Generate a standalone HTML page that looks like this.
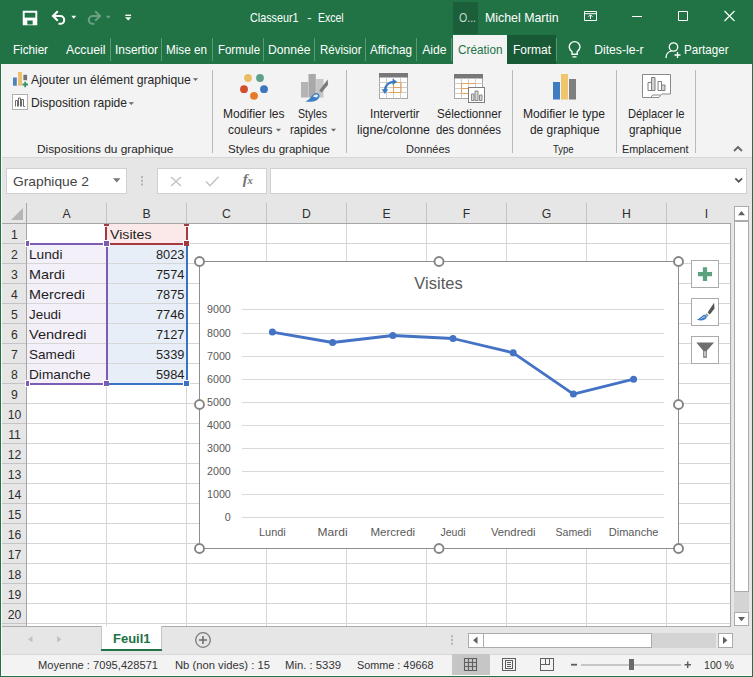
<!DOCTYPE html>
<html lang="fr"><head>
<meta charset="utf-8">
<title>Classeur1 - Excel</title>
<style>
html,body{margin:0;padding:0;}
body{width:753px;height:677px;overflow:hidden;position:relative;background:#fff;font-family:"Liberation Sans",sans-serif;font-size:12.200px;color:#262626;}
.a{position:absolute;}
svg{position:absolute;overflow:visible;}
.t{position:absolute;white-space:nowrap;line-height:16px;transform-origin:0 0;}
#titlebar{left:0;top:0;width:753px;height:64px;background:#217346;}
#titlebar .t{color:#fff;}
.sep{position:absolute;width:1px;top:38px;height:23px;background:#5b9877;}
#ribbon{left:1px;top:64px;width:751px;height:93px;background:#f3f3f3;}
.gsep{position:absolute;width:1px;top:6px;height:83px;background:#b9b9b9;}
#fbar{left:1px;top:157px;width:751px;height:46px;background:#e6e6e6;}
.box{position:absolute;background:#fff;border:1px solid #d0d0d0;box-sizing:border-box;}
#grid{left:1px;top:203px;width:751px;height:423px;background:#e6e6e6;overflow:hidden;}
.ch{position:absolute;top:1px;height:20px;line-height:20px;text-align:center;color:#2e2e2e;font-size:12.200px;width:80px;}
.rh{position:absolute;left:1px;width:25px;height:20px;line-height:22.400px;text-align:center;color:#2e2e2e;font-size:12.200px;}
.cell{font-size:13px;color:#1e1e1e;line-height:22px;}
#tabs{left:1px;top:626px;width:751px;height:28px;background:#e6e6e6;}
#status{left:1px;top:654px;width:751px;height:22px;background:#f3f3f3;}
#status .t{color:#333;font-size:11.700px;}
.ct{fill:#595959;font-family:"Liberation Sans",sans-serif;font-size:10.7px;}
</style>
</head>
<body>
<div id="titlebar" class="a">
  <svg style="left:0;top:0" width="753" height="64" viewBox="0 0 753 64" fill="none" stroke="#fff" stroke-width="1.2">
    <!-- save -->
    <path d="M23.700 11.700h12.600v12.600h-12.600z" stroke-width="1.900"></path>
    <path d="M24 17.600h12v6.400h-12z" fill="#fff" stroke="none"></path>
    <path d="M27.300 20.600h5.400v3.800h-5.400z" fill="#217346" stroke="none"></path>
    <!-- undo -->
    <path d="M53.500 16h6.800a3.900 3.900 0 0 1 0 7.800h-1.800" stroke-width="2.100"></path>
    <path d="M57.800 11.300l-4.800 4.700 4.800 4.700" stroke-width="2.100"></path>
    <path d="M71.300 15.800h5l-2.500 3z" fill="#fff" stroke="none"></path>
    <!-- redo -->
    <g opacity="0.32">
    <path d="M99.500 16h-6.800a3.900 3.900 0 0 0 0 7.800h1.800" stroke-width="2.100"></path>
    <path d="M95.200 11.300l4.800 4.700-4.800 4.700" stroke-width="2.100"></path>
    <path d="M105.800 15.800h5l-2.500 3z" fill="#fff" stroke="none"></path>
    </g>
    <!-- qat -->
    <path d="M125.300 15.300h5.800" stroke-width="1.400"></path>
    <path d="M125 17.300h6.400l-3.200 3.300z" fill="#fff" stroke="none"></path>
    <!-- ribbon display options -->
    <path d="M584.500 11.500h12v9h-12z M584.500 13.700h12" stroke-width="1"></path>
    <path d="M590.500 19v-4 M588.500 16.800l2-2 2 2" stroke-width="1"></path>
    <!-- min max close -->
    <path d="M632 16.500h10" stroke-width="1"></path>
    <path d="M678.500 11.500h9v9h-9z" stroke-width="1"></path>
    <path d="M724.500 11l10 10 M734.500 11l-10 10" stroke-width="1.1"></path>
    <!-- bulb -->
    <path d="M572 54.200v-2.500c-1.700-1.500-2.800-2.600-2.800-4.700a5.400 5.400 0 0 1 10.800 0c0 2.100-1.100 3.200-2.800 4.700v2.500z M572.500 56.800h4" stroke-width="1.350"></path>
    <!-- share person -->
    <circle cx="673.500" cy="47" r="4.200" stroke-width="1.350"></circle>
    <path d="M666 58c0-4 2.500-6.500 5.500-6.800" stroke-width="1.350"></path>
    <path d="M677.500 52v6 M674.500 55h6" stroke-width="1.350"></path>
  </svg>
  <span class="t" style="left: 250.2px; top: 10.3px; font-size: 12.8px; transform: scaleX(0.842);">Classeur1</span>
  <span class="t" style="left:307.200px;top:10.300px;font-size:12.800px;">-</span>
  <span class="t" style="left: 317.7px; top: 10.3px; font-size: 12.8px; transform: scaleX(0.815);">Excel</span>
  <div class="a" style="left:453px;top:2px;width:25px;height:32px;background:#1b5e3a;"></div>
  <span class="t" style="left: 458.7px; top: 10.3px; font-size: 12.8px; color: rgb(201, 221, 209); transform: scaleX(0.824);">O...</span>
  <span class="t" style="left: 484.7px; top: 10.3px; font-size: 12.8px; transform: scaleX(0.966);">Michel Martin</span>
  <div class="a" style="left:453px;top:35px;width:54px;height:29px;background:#f3f3f3;"></div>
  <div class="a" style="left:507px;top:35px;width:49px;height:29px;background:#185a36;"></div>
  <span class="t" style="left: 13.2px; top: 42.4px; transform: scaleX(0.957);">Fichier</span>
  <span class="t" style="left: 65.7px; top: 42.4px; transform: scaleX(1.005);">Accueil</span>
  <span class="t" style="left: 114.7px; top: 42.4px; transform: scaleX(0.977);">Insertior</span>
  <span class="t" style="left: 166.2px; top: 42.4px; transform: scaleX(0.96);">Mise en</span>
  <span class="t" style="left: 217.7px; top: 42.4px; transform: scaleX(0.94);">Formule</span>
  <span class="t" style="left: 268.2px; top: 42.4px; transform: scaleX(0.995);">Donnée</span>
  <span class="t" style="left: 319.7px; top: 42.4px; transform: scaleX(0.943);">Révisior</span>
  <span class="t" style="left: 370.2px; top: 42.4px; transform: scaleX(0.958);">Affichag</span>
  <span class="t" style="left: 422.2px; top: 42.4px;">Aide</span>
  <span class="t" style="left: 457.7px; top: 42.4px; color: rgb(33, 115, 70); transform: scaleX(0.966);">Création</span>
  <span class="t" style="left: 513.2px; top: 42.4px; transform: scaleX(0.984);">Format</span>
  <span class="t" style="left: 594.2px; top: 42.4px;">Dites-le-r</span>
  <span class="t" style="left: 684.2px; top: 42.4px; transform: scaleX(0.952);">Partager</span>
  <div class="sep" style="left:110px"></div>
  <div class="sep" style="left:161px"></div>
  <div class="sep" style="left:212px"></div>
  <div class="sep" style="left:263px"></div>
  <div class="sep" style="left:314px"></div>
  <div class="sep" style="left:365px"></div>
  <div class="sep" style="left:416px"></div>
  <div class="sep" style="left:451px"></div>
  <div class="sep" style="left:556px"></div>
</div>
<div id="ribbon" class="a">
  <!-- coordinates inside ribbon: x-1, y-64 -->
  <div class="gsep" style="left:211px"></div>
  <div class="gsep" style="left:345px"></div>
  <div class="gsep" style="left:511px"></div>
  <div class="gsep" style="left:615px"></div>
  <div class="gsep" style="left:694px"></div>
  <svg style="left:-1px;top:-64px" width="753" height="158" viewBox="0 0 753 158">
    <!-- add chart element icon -->
    <rect x="13" y="77.500" width="3.800" height="8.200" fill="#4f81bd"></rect>
    <rect x="18" y="72" width="4" height="13.700" fill="#ebc06f"></rect>
    <rect x="23.400" y="74.800" width="3.700" height="5.400" fill="#737373"></rect>
    <path d="M22.500 84.500h5.500 M25.200 81.800v5.500" stroke="#3a8f68" stroke-width="1.800" fill="none"></path>
    <!-- quick layout icon -->
    <rect x="12.500" y="94.500" width="15" height="15" fill="#fff" stroke="#b0b0b0" stroke-width="1"></rect>
    <path d="M15.500 106.500v-6h2v6 M18.500 106.500v-8.500h2v8.500 M21.500 106.500v-7h2v7h1.500" stroke="#6a6a6a" stroke-width="1" fill="none"></path>
    <!-- dropdown arrows -->
    <path d="M192.800 78.200h5.400l-2.700 2.900z M128.600 102.200h5.400l-2.700 2.900z M275.800 128.700h5.400l-2.700 2.900z M330.800 128.700h5.400l-2.700 2.900z" fill="#6a6a6a"></path>
    <!-- colour dots -->
    <circle cx="248" cy="78" r="3.900" fill="#ebbe62"></circle>
    <circle cx="260" cy="78" r="3.900" fill="#5fa08b"></circle>
    <circle cx="244" cy="89.200" r="3.900" fill="#d24f2e"></circle>
    <circle cx="264" cy="89.200" r="3.900" fill="#3c76c0"></circle>
    <circle cx="254" cy="95.800" r="3.900" fill="#e8782a"></circle>
    <!-- quick styles icon -->
    <rect x="301" y="82" width="7.200" height="15.500" fill="#b4b4b4"></rect>
    <rect x="308.500" y="74" width="7.300" height="23.500" fill="#a9a9a9"></rect>
    <rect x="316.100" y="79" width="7.400" height="18.500" fill="#c6c6c6"></rect>
    <path d="M327.700 79.600l0.400 5.200-6.600 8-2.300-2.200z" fill="#7a7a7a"></path>
    <path d="M319.200 90.600l2.300 2.200-1.400 1.700-2.400-2.100z" fill="#c2c2c2"></path>
    <path d="M305.200 101.300c4.300-0.900 5.800-5.300 9-7.600 2.800-1.800 6 0.500 5.200 3.300-1.300 4.200-7.800 5.800-14.200 4.300z" fill="#3f7fc4"></path>
    <path d="M312.800 96.600c1.300-1.700 3-2.600 4.600-1.900 1 0.600 0.700 2-0.600 2.800z" fill="#e9f0f9"></path>
    <!-- switch row/column icon -->
    <rect x="379.500" y="73.500" width="28" height="25" fill="#fff" stroke="#a6a6a6"></rect>
    <rect x="379" y="73" width="29" height="4.500" fill="#787878"></rect>
    <path d="M379.500 82.500h28 M379.500 87.500h28 M379.500 92.500h28 M386.500 77.500v21 M393.500 77.500v21 M400.500 77.500v21" stroke="#cdcdcd" stroke-width="1" fill="none"></path>
    <path d="M393.500 82.500h7.500v10h-7.500z M393.500 87.500h7.500 M389.500 92.500h4" stroke="#e3a35c" stroke-width="1.100" fill="none"></path>
    <path d="M385 90.500c0.300-5 3.600-8.300 8.600-8.600" stroke="#3a78c2" stroke-width="2.300" fill="none"></path>
    <path d="M392.600 78.600l4.600 3.200-4.600 3.200z M381.600 89.200l3.300 4.800 3.300-4.800z" fill="#3a78c2"></path>
    <!-- select data icon -->
    <rect x="454.500" y="74.500" width="28" height="24" fill="#fff" stroke="#a6a6a6"></rect>
    <rect x="454" y="74" width="29" height="4.500" fill="#787878"></rect>
    <path d="M454.500 83.500h28 M454.500 88.500h28 M454.500 93.500h28 M461.500 78.500v20 M468.500 78.500v20 M475.500 78.500v20" stroke="#cdcdcd" stroke-width="1" fill="none"></path>
    <path d="M461.500 93.500v-10h14 M461.500 88.500h8 M461.500 93.500h7" stroke="#e3a35c" stroke-width="1.100" fill="none"></path>
    <rect x="468.500" y="87.500" width="16" height="15" fill="#fff" stroke="#7d7d7d"></rect>
    <path d="M471.500 100.500v-6.500h2.500v6.500z M475 100.500v-9.500h3v9.500z M479.500 100.500v-5.500h2.500v5.500z" stroke="#7d7d7d" stroke-width="0.900" fill="#d9d9d9"></path>
    <!-- change chart type -->
    <rect x="553" y="82" width="7" height="17.500" fill="#3f7dc3"></rect>
    <rect x="561" y="74" width="7" height="25.500" fill="#f0c56e"></rect>
    <rect x="569" y="79" width="7" height="20.500" fill="#7f7f7f"></rect>
    <!-- move chart -->
    <path d="M642.500 74.500h28v19.500h-9l-2.500 3.500h-16.500z" fill="#fff" stroke="#8a8a8a"></path>
    <path d="M651 97.500l1.500-2.500h7.500" fill="none" stroke="#8a8a8a"></path>
    <path d="M648 90.500v-8h3.500v8z M658 90.500v-9h3.500v9z" fill="#fff" stroke="#7f7f7f" stroke-width="1"></path>
    <path d="M651.500 90.500v-13h3.500v13z M661.500 90.500v-5.500h3.500v5.500z" fill="#d4d4d4" stroke="#7f7f7f" stroke-width="1"></path>
    <!-- collapse chevron -->
    <path d="M734 151l4-4 4 4" stroke="#666" stroke-width="1.800" fill="none"></path>
  </svg>
  <span class="t" style="left: 30px; top: 7.7px;">Ajouter un élément graphique</span>
  <span class="t" style="left: 30px; top: 30.9px; transform: scaleX(0.991);">Disposition rapide</span>
  <span class="t" style="left: 36.3px; top: 76.8px; font-size: 11.8px; transform: scaleX(1.005);">Dispositions du graphique</span>
  <span class="t" style="left: 221.8px; top: 42.4px; transform: scaleX(0.987);">Modifier les</span>
  <span class="t" style="left: 227.3px; top: 58.3px; transform: scaleX(0.966);">couleurs</span>
  <span class="t" style="left: 296.8px; top: 42.4px; transform: scaleX(0.873);">Styles</span>
  <span class="t" style="left: 289.3px; top: 58.3px; transform: scaleX(0.925);">rapides</span>
  <span class="t" style="left: 227.3px; top: 76.8px; font-size: 11.8px; transform: scaleX(0.978);">Styles du graphique</span>
  <span class="t" style="left: 368.8px; top: 42.4px; transform: scaleX(0.961);">Intervertir</span>
  <span class="t" style="left: 355.8px; top: 58.3px; transform: scaleX(1.016);">ligne/colonne</span>
  <span class="t" style="left: 435.8px; top: 42.4px; transform: scaleX(0.952);">Sélectionner</span>
  <span class="t" style="left: 435.3px; top: 58.3px; transform: scaleX(0.931);">des données</span>
  <span class="t" style="left: 405.3px; top: 76.8px; font-size: 11.8px; transform: scaleX(0.932);">Données</span>
  <span class="t" style="left: 522.3px; top: 42.4px; transform: scaleX(0.992);">Modifier le type</span>
  <span class="t" style="left: 528.8px; top: 58.3px; transform: scaleX(0.977);">de graphique</span>
  <span class="t" style="left: 552.3px; top: 76.8px; font-size: 11.8px; transform: scaleX(0.801);">Type</span>
  <span class="t" style="left: 626.8px; top: 42.4px; transform: scaleX(0.916);">Déplacer le</span>
  <span class="t" style="left: 628.3px; top: 58.3px; transform: scaleX(0.968);">graphique</span>
  <span class="t" style="left: 621.3px; top: 76.8px; font-size: 11.8px; transform: scaleX(0.922);">Emplacement</span>
</div>
<div id="fbar" class="a">
  <div class="a" style="left:0;top:0;width:751px;height:1px;background:#d6d6d6;"></div>
  <!-- coords: x-1, y-157 -->
  <div class="box" style="left:5px;top:11px;width:121px;height:26px;"></div>
  <div class="box" style="left:156px;top:11px;width:110px;height:26px;"></div>
  <div class="box" style="left:269px;top:11px;width:477px;height:26px;"></div>
  <span class="t" style="left: 11.5px; top: 16.9px; font-size: 12.6px; color: rgb(68, 68, 68); transform: scaleX(1.096);">Graphique 2</span>
  <svg style="left:-1px;top:-157px" width="753" height="210" viewBox="0 0 753 210">
    <path d="M113 178.300h7.500l-3.750 4.200z" fill="#777"></path>
    <path d="M141 176h2v2h-2z M141 179.700h2v2h-2z M141 183.400h2v2h-2z" fill="#b4b4b4"></path>
    <path d="M171 177l10 9 M181 177l-10 9" stroke="#c2c2c2" stroke-width="1.400" fill="none"></path>
    <path d="M206 181.500l4 4.200 8.500-9" stroke="#c2c2c2" stroke-width="1.500" fill="none"></path>
    <path d="M735.300 178.300l3.400 3.400 3.400-3.400" stroke="#555" stroke-width="1.700" fill="none"></path>
  </svg>
  <span class="t" style="left:241.800px;top:13.800px;font-family:'Liberation Serif',serif;font-style:italic;font-weight:bold;font-size:15px;color:#757575;letter-spacing:-0.3px;">f<span style="font-size:10.500px;">x</span></span>
</div>
<div id="grid" class="a">
  <!-- coords: x-1, y-203 -->
  <div class="a" style="left:26px;top:21px;width:703px;height:402px;background:#fff;"></div>
  <div class="a" style="left:106px;top:21px;width:79px;height:19px;background:#fbe9e9;"></div>
  <div class="a" style="left:26px;top:41px;width:79px;height:139px;background:#f3f0fa;"></div>
  <div class="a" style="left:106px;top:41px;width:79px;height:139px;background:#e7eef8;"></div>
  <svg style="left:0;top:0" width="751" height="423" viewBox="0 0 751 423" shape-rendering="crispEdges">
    <path d="M26 40.5h703 M26 60.5h703 M26 80.5h703 M26 100.5h703 M26 120.5h703 M26 140.5h703 M26 160.5h703 M26 180.5h703 M26 200.5h703 M26 220.5h703 M26 240.5h703 M26 260.5h703 M26 280.5h703 M26 300.5h703 M26 320.5h703 M26 340.5h703 M26 360.5h703 M26 380.5h703 M26 400.5h703 M26 420.5h703 M105.5 21v402 M185.5 21v402 M265.5 21v402 M345.5 21v402 M425.5 21v402 M505.5 21v402 M585.5 21v402 M665.5 21v402" stroke="#d6d6d6" stroke-width="1" fill="none"></path>
    <path d="M105.5 0v20 M185.5 0v20 M265.5 0v20 M345.5 0v20 M425.5 0v20 M505.5 0v20 M585.5 0v20 M665.5 0v20 M0 40.5h25 M0 60.5h25 M0 80.5h25 M0 100.5h25 M0 120.5h25 M0 140.5h25 M0 160.5h25 M0 180.5h25 M0 200.5h25 M0 220.5h25 M0 240.5h25 M0 260.5h25 M0 280.5h25 M0 300.5h25 M0 320.5h25 M0 340.5h25 M0 360.5h25 M0 380.5h25 M0 400.5h25 M0 420.5h25" stroke="#c4c4c4" stroke-width="1" fill="none"></path>
    <path d="M0 20.500h729 M25.500 0v423" stroke="#a6a6a6" stroke-width="1" fill="none"></path>
    <path d="M729.500 20v403" stroke="#a6a6a6" stroke-width="1" fill="none"></path>
    <path d="M10 17h12v-12z" fill="#b5b5b5" shape-rendering="auto"></path>
  </svg>
  <span class="t cell" style="left: 108.5px; top: 21px; transform: scaleX(1.09);">Visites</span>
  <span class="t cell" style="left: 28px; top: 41px; transform: scaleX(1.053);">Lundi</span>
  <span class="t cell" style="left: 155px; top: 41px; transform: scaleX(0.985);">8023</span>
  <span class="t cell" style="left: 28px; top: 61px; transform: scaleX(1.107);">Mardi</span>
  <span class="t cell" style="left: 155px; top: 61px; transform: scaleX(0.985);">7574</span>
  <span class="t cell" style="left: 28px; top: 81px; transform: scaleX(1.107);">Mercredi</span>
  <span class="t cell" style="left: 155px; top: 81px; transform: scaleX(0.985);">7875</span>
  <span class="t cell" style="left: 28px; top: 101px; transform: scaleX(1.03);">Jeudi</span>
  <span class="t cell" style="left: 155px; top: 101px; transform: scaleX(0.985);">7746</span>
  <span class="t cell" style="left: 28px; top: 121px; transform: scaleX(1.12);">Vendredi</span>
  <span class="t cell" style="left: 155px; top: 121px; transform: scaleX(0.985);">7127</span>
  <span class="t cell" style="left: 28px; top: 141px; transform: scaleX(1.044);">Samedi</span>
  <span class="t cell" style="left: 155px; top: 141px; transform: scaleX(0.985);">5339</span>
  <span class="t cell" style="left: 28px; top: 161px; transform: scaleX(1.051);">Dimanche</span>
  <span class="t cell" style="left: 155px; top: 161px; transform: scaleX(0.985);">5984</span>
  <div class="a" style="left:104px;top:24px;width:2px;height:14px;background:#a8383f;"></div>
  <div class="a" style="left:185px;top:24px;width:2px;height:14px;background:#a8383f;"></div>
  <div class="a" style="left:108px;top:40px;width:76px;height:2px;background:#a8383f;"></div>
  <div class="a" style="left:103px;top:21px;width:5px;height:2px;background:#a8383f;"></div>
  <div class="a" style="left:183px;top:21px;width:5px;height:2px;background:#a8383f;"></div>
  <div class="a" style="left:183px;top:38px;width:5px;height:5px;background:#a8383f;box-shadow:0 0 0 1px #fff;"></div>
  <div class="a" style="left:26px;top:40px;width:78px;height:2px;background:#7d5db3;"></div>
  <div class="a" style="left:105px;top:43px;width:2px;height:137px;background:#7d5db3;"></div>
  <div class="a" style="left:26px;top:180px;width:78px;height:2px;background:#7d5db3;"></div>
  <div class="a" style="left:103px;top:38px;width:5px;height:5px;background:#7d5db3;box-shadow:0 0 0 1px #fff;"></div>
  <div class="a" style="left:103px;top:178px;width:5px;height:5px;background:#7d5db3;box-shadow:0 0 0 1px #fff;"></div>
  <div class="a" style="left:25px;top:38px;width:3px;height:5px;background:#7d5db3;box-shadow:0 0 0 1px #fff;"></div>
  <div class="a" style="left:25px;top:178px;width:3px;height:5px;background:#7d5db3;box-shadow:0 0 0 1px #fff;"></div>
  <div class="a" style="left:185px;top:43px;width:2px;height:137px;background:#3b73c4;"></div>
  <div class="a" style="left:108px;top:180px;width:76px;height:2px;background:#3b73c4;"></div>
  <div class="a" style="left:183px;top:178px;width:5px;height:5px;background:#3b73c4;box-shadow:0 0 0 1px #fff;"></div>
  <div class="ch" style="left:26px;width:79px;">A</div>
  <div class="ch" style="left:106px;width:79px;">B</div>
  <div class="ch" style="left:186px;width:79px;">C</div>
  <div class="ch" style="left:266px;width:79px;">D</div>
  <div class="ch" style="left:346px;width:79px;">E</div>
  <div class="ch" style="left:426px;width:79px;">F</div>
  <div class="ch" style="left:506px;width:79px;">G</div>
  <div class="ch" style="left:586px;width:79px;">H</div>
  <div class="ch" style="left:666px;width:79px;">I</div>
  <div class="rh" style="top:21px;">1</div>
  <div class="rh" style="top:41px;">2</div>
  <div class="rh" style="top:61px;">3</div>
  <div class="rh" style="top:81px;">4</div>
  <div class="rh" style="top:101px;">5</div>
  <div class="rh" style="top:121px;">6</div>
  <div class="rh" style="top:141px;">7</div>
  <div class="rh" style="top:161px;">8</div>
  <div class="rh" style="top:181px;">9</div>
  <div class="rh" style="top:201px;">10</div>
  <div class="rh" style="top:221px;">11</div>
  <div class="rh" style="top:241px;">12</div>
  <div class="rh" style="top:261px;">13</div>
  <div class="rh" style="top:281px;">14</div>
  <div class="rh" style="top:301px;">15</div>
  <div class="rh" style="top:321px;">16</div>
  <div class="rh" style="top:341px;">17</div>
  <div class="rh" style="top:361px;">18</div>
  <div class="rh" style="top:381px;">19</div>
  <div class="rh" style="top:401px;">20</div>
  <div class="box" style="left:733px;top:3px;width:15px;height:15px;border-color:#ababab;"></div>
  <div class="box" style="left:733px;top:18px;width:15px;height:371px;border-color:#ababab;"></div>
  <div class="a" style="left:733px;top:389px;width:15px;height:20px;background:#d4d4d4;"></div>
  <div class="box" style="left:733px;top:409px;width:15px;height:14px;border-color:#ababab;"></div>
  <svg style="left:0;top:0" width="751" height="423" viewBox="0 0 751 423"><path d="M737 12.200h7l-3.500-4.200z M737 414h7l-3.500 4.200z" fill="#606060"></path></svg>
</div>
<svg id="chart" style="left:0;top:0" width="753" height="677" viewBox="0 0 753 677">
  <rect x="199.500" y="261.500" width="479" height="287" fill="#fff" stroke="#8e8e8e" stroke-width="1"></rect>
  <path d="M242.300 309.5H663.700 M242.300 333.5H663.700 M242.300 356.5H663.700 M242.300 379.5H663.700 M242.300 402.5H663.700 M242.300 425.5H663.700 M242.300 448.5H663.700 M242.300 471.5H663.700 M242.300 494.5H663.700 M242.300 517.5H663.700" stroke="#d9d9d9" stroke-width="1" fill="none" shape-rendering="crispEdges"></path>
  <text class="ct" x="230.800" y="312.6" text-anchor="end">9000</text>
  <text class="ct" x="230.800" y="336.6" text-anchor="end">8000</text>
  <text class="ct" x="230.800" y="359.6" text-anchor="end">7000</text>
  <text class="ct" x="230.800" y="382.6" text-anchor="end">6000</text>
  <text class="ct" x="230.800" y="405.6" text-anchor="end">5000</text>
  <text class="ct" x="230.800" y="428.6" text-anchor="end">4000</text>
  <text class="ct" x="230.800" y="451.6" text-anchor="end">3000</text>
  <text class="ct" x="230.800" y="474.6" text-anchor="end">2000</text>
  <text class="ct" x="230.800" y="497.6" text-anchor="end">1000</text>
  <text class="ct" x="230.800" y="520.6" text-anchor="end">0</text>
  <text class="ct" x="272.4" y="536.200" text-anchor="middle" textLength="26.8" lengthAdjust="spacingAndGlyphs">Lundi</text>
  <text class="ct" x="332.6" y="536.200" text-anchor="middle" textLength="30" lengthAdjust="spacingAndGlyphs">Mardi</text>
  <text class="ct" x="392.8" y="536.200" text-anchor="middle" textLength="44.8" lengthAdjust="spacingAndGlyphs">Mercredi</text>
  <text class="ct" x="453.0" y="536.200" text-anchor="middle" textLength="25.2" lengthAdjust="spacingAndGlyphs">Jeudi</text>
  <text class="ct" x="513.2" y="536.200" text-anchor="middle" textLength="44.6" lengthAdjust="spacingAndGlyphs">Vendredi</text>
  <text class="ct" x="573.4" y="536.200" text-anchor="middle" textLength="35.8" lengthAdjust="spacingAndGlyphs">Samedi</text>
  <text class="ct" x="633.6" y="536.200" text-anchor="middle" textLength="49.6" lengthAdjust="spacingAndGlyphs">Dimanche</text>
  <text x="438.500" y="288.600" text-anchor="middle" fill="#595959" font-family="Liberation Sans, sans-serif" font-size="16.500">Visites</text>
  <polyline points="272.4,332.1 332.6,342.5 392.8,335.5 453.0,338.5 513.2,352.8 573.4,394.1 633.6,379.2" fill="none" stroke="#4472c4" stroke-width="2.800" stroke-linejoin="round" stroke-linecap="round"></polyline>
  <circle cx="272.4" cy="332.1" r="3.500" fill="#4472c4"></circle>
  <circle cx="332.6" cy="342.5" r="3.500" fill="#4472c4"></circle>
  <circle cx="392.8" cy="335.5" r="3.500" fill="#4472c4"></circle>
  <circle cx="453.0" cy="338.5" r="3.500" fill="#4472c4"></circle>
  <circle cx="513.2" cy="352.8" r="3.500" fill="#4472c4"></circle>
  <circle cx="573.4" cy="394.1" r="3.500" fill="#4472c4"></circle>
  <circle cx="633.6" cy="379.2" r="3.500" fill="#4472c4"></circle>
  <circle cx="199.5" cy="261.5" r="4.500" fill="#fff" stroke="#848484" stroke-width="1.900"></circle>
  <circle cx="439" cy="261.5" r="4.500" fill="#fff" stroke="#848484" stroke-width="1.900"></circle>
  <circle cx="678.5" cy="261.5" r="4.500" fill="#fff" stroke="#848484" stroke-width="1.900"></circle>
  <circle cx="199.5" cy="404.5" r="4.500" fill="#fff" stroke="#848484" stroke-width="1.900"></circle>
  <circle cx="678.5" cy="404.5" r="4.500" fill="#fff" stroke="#848484" stroke-width="1.900"></circle>
  <circle cx="199.5" cy="548.5" r="4.500" fill="#fff" stroke="#848484" stroke-width="1.900"></circle>
  <circle cx="439" cy="548.5" r="4.500" fill="#fff" stroke="#848484" stroke-width="1.900"></circle>
  <circle cx="678.5" cy="548.5" r="4.500" fill="#fff" stroke="#848484" stroke-width="1.900"></circle>
  <rect x="691.500" y="260.5" width="27" height="27" fill="#fff" stroke="#ababab" stroke-width="1"></rect>
  <rect x="691.500" y="298.5" width="27" height="27" fill="#fff" stroke="#ababab" stroke-width="1"></rect>
  <rect x="691.500" y="336.5" width="27" height="27" fill="#fff" stroke="#ababab" stroke-width="1"></rect>
  <path d="M698 274.200h14 M705 267.300v13.800" stroke="#5ba37e" stroke-width="4.200" fill="none"></path>
  <path d="M707.600 312.400l6.500-9.600 0.400 5.600-4.600 6z" fill="#555"></path>
  <path d="M706.600 313.200l2.300 2.100-1.300 1.400-2.300-2.100z" fill="#a0a0a0"></path>
  <path d="M696.800 319.800c3-0.800 4.200-3.400 6.500-4.700 2-1 4 0.700 3.400 2.500-0.900 2.700-5.200 3.500-9.900 2.200z" fill="#3f7fc4"></path>
  <path d="M701.500 318.600c1-1.300 2.200-2 3.300-1.600" stroke="#dfe9f6" stroke-width="0.900" fill="none"></path>
  <path d="M696.300 342.400h17.700l-7.200 8.400v7h-3.600v-7z" fill="#6e6e6e"></path>
  <path d="M704.400 351.300h1.200v5.200h-1.200z" fill="#fff"></path>
</svg>
<div id="tabs" class="a">
  <!-- coords x-1, y-626 -->
  <div class="a" style="left:0;top:0;width:730px;height:1px;background:#ababab;"></div>
  <div class="a" style="left:100px;top:0;width:61px;height:25px;background:#fff;border-left:1px solid #c6c6c6;border-right:1px solid #c6c6c6;box-sizing:border-box;"></div>
  <div class="a" style="left:100px;top:23px;width:61px;height:2px;background:#217346;"></div>
  <span class="t" style="left: 112px; top: 5.2px; font-weight: bold; font-size: 12.2px; color: rgb(33, 115, 70); transform: scaleX(1.065);">Feuil1</span>
  <div class="box" style="left:467px;top:7px;width:16px;height:15px;border-color:#ababab;"></div>
  <div class="box" style="left:482px;top:7px;width:169px;height:15px;border-color:#ababab;"></div>
  <div class="a" style="left:651px;top:7px;width:64px;height:15px;background:#d4d4d4;"></div>
  <div class="box" style="left:717px;top:7px;width:15px;height:15px;border-color:#ababab;"></div>
  <svg style="left:-1px;top:-626px" width="753" height="677" viewBox="0 0 753 677">
    <path d="M32.500 636v6.500l-4.500-3.250z M57 636v6.500l4.500-3.250z" fill="#c3c3c3"></path>
    <circle cx="203" cy="640" r="7.300" fill="none" stroke="#7a7a7a" stroke-width="1.300"></circle>
    <path d="M199 640h8 M203 636v8" stroke="#6a6a6a" stroke-width="1.500" fill="none"></path>
    <path d="M451 635.300h2v2h-2z M451 639h2v2h-2z M451 642.700h2v2h-2z" fill="#b4b4b4"></path>
    <path d="M477.500 636.500v7.600l-4.400-3.800z M723 636.500v7.600l4.400-3.800z" fill="#606060"></path>
  </svg>
</div>
<div id="status" class="a">
  <div class="a" style="left:0;top:0;width:751px;height:1px;background:#d8d8d8;"></div>
  <!-- coords x-1, y-654 -->
  <div class="a" style="left:451px;top:0;width:38px;height:21px;background:#c6c6c6;"></div>
  <span class="t" style="left: 36.5px; top: 2.8px; transform: scaleX(0.952);">Moyenne : 7095,428571</span>
  <span class="t" style="left: 174px; top: 2.8px; transform: scaleX(0.962);">Nb (non vides) : 15</span>
  <span class="t" style="left: 284px; top: 2.8px; transform: scaleX(0.968);">Min. : 5339</span>
  <span class="t" style="left: 356px; top: 2.8px; transform: scaleX(0.927);">Somme : 49668</span>
  <span class="t" style="left: 702.5px; top: 2.8px; transform: scaleX(0.905);">100 %</span>
  <svg style="left:-1px;top:-654px" width="753" height="677" viewBox="0 0 753 677" fill="none" stroke="#5f5f5f" stroke-width="1">
    <path d="M464.500 658.500h12v12h-12z M468.500 658.500v12 M472.500 658.500v12 M464.500 662.500h12 M464.500 666.500h12" stroke-width="1.100"></path>
    <path d="M502.500 658.500h13v12h-13z M505.500 660.500h7v8h-7z M507 662.500h4 M507 664.500h4 M507 666.500h4" shape-rendering="crispEdges"></path>
    <path d="M540.500 658.500h13v12h-13z M540.500 664.500h9v-6 M545.500 658.500v6" shape-rendering="crispEdges"></path>
    <path d="M571 664.700h6" stroke-width="1.800"></path>
    <path d="M581 665h100" stroke="#9a9a9a"></path>
    <path d="M684.500 664.700h6.500 M687.700 661.500v6.500" stroke-width="1.500"></path>
    <rect x="629" y="659" width="5" height="11" fill="#6a6a6a" stroke="none"></rect>
  </svg>
</div>
<div class="a" style="left:0;top:0;width:1px;height:677px;background:#217346;"></div>
<div class="a" style="left:1px;top:64px;width:1px;height:612px;background:#fafcfb;"></div>
<div class="a" style="left:752px;top:0;width:1px;height:677px;background:#217346;"></div>
<div class="a" style="left:0;top:676px;width:753px;height:1px;background:#217346;"></div>
<div class="a" style="left:1px;top:675px;width:751px;height:1px;background:#f9fbfa;"></div>


</body></html>
